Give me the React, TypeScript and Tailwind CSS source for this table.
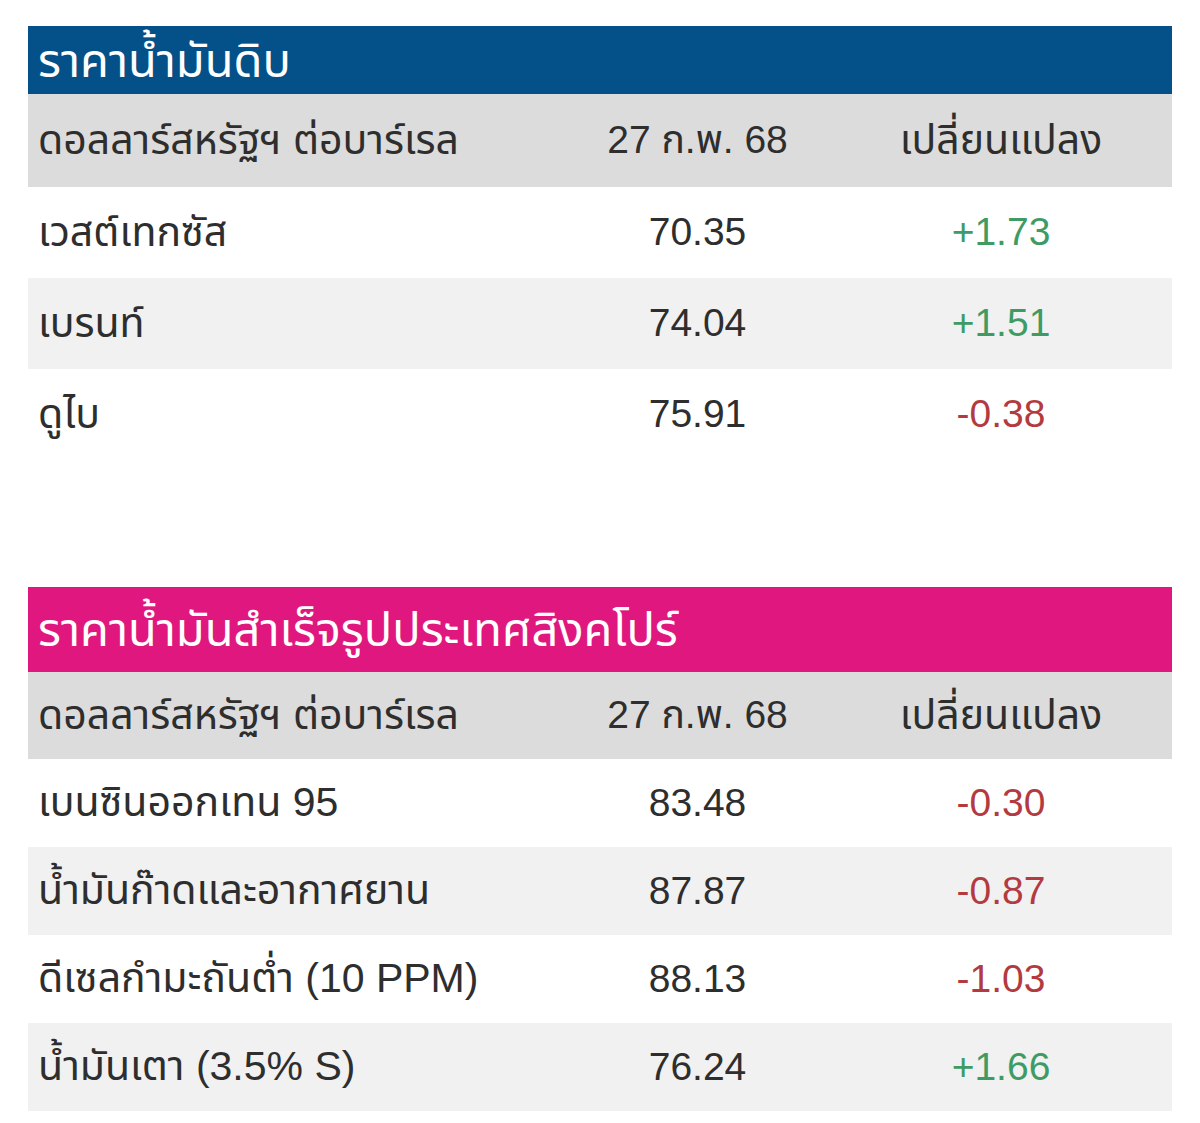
type Row = { name: string; price: string; change: string };

const crude: Row[] = [
  { name: "เวสต์เทกซัส", price: "70.35", change: "+1.73" },
  { name: "เบรนท์", price: "74.04", change: "+1.51" },
  { name: "ดูไบ", price: "75.91", change: "-0.38" },
];

const refined: Row[] = [
  { name: "เบนซินออกเทน 95", price: "83.48", change: "-0.30" },
  { name: "น้ำมันก๊าดและอากาศยาน", price: "87.87", change: "-0.87" },
  { name: "ดีเซลกำมะถันต่ำ (10 PPM)", price: "88.13", change: "-1.03" },
  { name: "น้ำมันเตา (3.5% S)", price: "76.24", change: "+1.66" },
];

function PriceTable({
  title,
  titleBg,
  titleH,
  headH,
  rowH,
  rows,
}: {
  title: string;
  titleBg: string;
  titleH: string;
  headH: string;
  rowH: string;
  rows: Row[];
}) {
  return (
    <div className="w-full">
      <div className={`${titleBg} ${titleH} flex items-center px-[10px] text-white text-[47px] leading-none`}>
        {title}
      </div>
      <div className={`${headH} grid grid-cols-[537px_265px_1fr] items-center bg-[#dcdcdc] text-[#2e2e2e] text-[39px]`}>
        <div className="pl-[10px] text-[41px]">ดอลลาร์สหรัฐฯ ต่อบาร์เรล</div>
        <div className="text-center">27 ก.พ. 68</div>
        <div className="text-center text-[41px]">เปลี่ยนแปลง</div>
      </div>
      {rows.map((r, i) => (
        <div
          key={r.name}
          className={`${rowH} grid grid-cols-[537px_265px_1fr] items-center text-[39px] ${i % 2 === 1 ? "bg-[#f1f1f1]" : "bg-white"}`}
        >
          <div className="pl-[10px] text-[#2e2e2e] text-[41px]">{r.name}</div>
          <div className="text-center text-[#2e2e2e]">{r.price}</div>
          <div className={`text-center ${r.change.startsWith("+") ? "text-[#3e9b63]" : "text-[#b33a3f]"}`}>
            {r.change}
          </div>
        </div>
      ))}
    </div>
  );
}

export default function App() {
  return (
    <div
      className="w-[1200px] h-[1123px] bg-white px-[28px] pt-[26px] flex flex-col gap-[127px]"
      style={{ fontFamily: '"Liberation Sans", "Noto Sans Thai", "Noto Sans", sans-serif' }}
    >
      <PriceTable
        title="ราคาน้ำมันดิบ"
        titleBg="bg-[#04518a]"
        titleH="h-[68px]"
        headH="h-[93px]"
        rowH="h-[91px]"
        rows={crude}
      />
      <PriceTable
        title="ราคาน้ำมันสำเร็จรูปประเทศสิงคโปร์"
        titleBg="bg-[#e0177f]"
        titleH="h-[85px]"
        headH="h-[87px]"
        rowH="h-[88px]"
        rows={refined}
      />
    </div>
  );
}
